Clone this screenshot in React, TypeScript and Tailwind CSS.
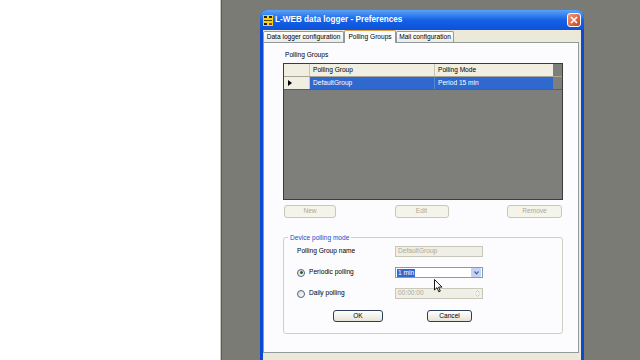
import React from "react";

function XpButton({ label, disabled, className = "" }: { label: string; disabled?: boolean; className?: string }) {
  return (
    <div
      className={`flex items-center justify-center rounded-[3px] border ${
        disabled
          ? "border-[#c9c7ba] bg-[#f5f4ea] text-[#aca899]"
          : "border-[#2b3f5c] bg-gradient-to-b from-white to-[#e6e3d6] text-black"
      } ${className}`}
    >
      {label}
    </div>
  );
}

function Radio({ checked }: { checked?: boolean }) {
  return (
    <div className="flex h-[8px] w-[8px] items-center justify-center rounded-full border border-[#4d6185] bg-gradient-to-br from-[#dcdcd4] to-white">
      {checked && <div className="h-[3px] w-[3px] rounded-full bg-[#2f5a2a]" />}
    </div>
  );
}

function TitleIcon() {
  return (
    <svg width="10" height="11" viewBox="0 0 10 11">
      <rect x="0" y="0" width="10" height="11" fill="#f4d21c" />
      <rect x="1" y="1" width="3" height="2" fill="#222" />
      <rect x="6" y="1" width="3" height="2" fill="#222" />
      <rect x="1" y="5" width="8" height="1" fill="#5a4a00" />
      <rect x="1" y="8" width="3" height="2" fill="#222" />
      <rect x="6" y="8" width="3" height="2" fill="#c03020" />
    </svg>
  );
}

function Dialog() {
  return (
    <div className="flex h-[360px] w-[324px] flex-col overflow-hidden rounded-t-[7px] bg-[#0b4ad0]">
      {/* Title bar */}
      <div className="flex h-[20px] shrink-0 items-center bg-gradient-to-b from-[#5aa2fa] via-[#1461e6] to-[#0c52d8] pl-[3px] pr-[3px]">
        <TitleIcon />
        <span className="ml-[2px] text-[8.2px] font-bold leading-none text-white">L-WEB data logger - Preferences</span>
        <div className="ml-auto flex h-[14px] w-[14px] items-center justify-center rounded-[3px] border border-white bg-gradient-to-br from-[#f09a78] to-[#c8401a]">
          <svg width="8" height="8" viewBox="0 0 8 8">
            <path d="M1 1 L7 7 M7 1 L1 7" stroke="white" strokeWidth="1.6" />
          </svg>
        </div>
      </div>

      {/* Body */}
      <div className="flex flex-1 flex-col border-x-[3px] border-[#0b4ad0] bg-[#ece9d8]">
        {/* Tabs */}
        <div className="flex h-[12px] items-end">
          <div className="flex h-[11px] w-[81px] items-center justify-center rounded-t-[2px] border border-b-0 border-[#919b9c] bg-gradient-to-b from-white to-[#ecebe5]">
            Data logger configuration
          </div>
          <div className="relative z-10 -mb-px flex h-[13px] w-[52px] items-center justify-center rounded-t-[2px] border border-b-0 border-[#919b9c] border-t-[#e8a040] bg-[#fcfcfe]">
            Polling Groups
          </div>
          <div className="flex h-[11px] w-[58px] items-center justify-center rounded-t-[2px] border border-b-0 border-[#919b9c] bg-gradient-to-b from-white to-[#ecebe5]">
            Mail configuration
          </div>
        </div>

        {/* Panel */}
        <div className="h-[311px] w-[316px] border border-[#919b9c] bg-[#fcfcfe] pl-[19px] pt-[7px]">
          <div className="h-[9px] pl-[2px] leading-[9px]">Polling Groups</div>

          {/* Grid */}
          <div className="mt-[4px] h-[137px] w-[280px] border border-[#3c3c3c] bg-[#7e7e7a]">
            <div className="flex h-[13px] border-b border-[#a8a697]">
              <div className="w-[26px] border-r border-[#c8c6b6] bg-[#f1efe2]" />
              <div className="flex w-[125px] items-center border-r border-[#c8c6b6] bg-[#f1efe2] pl-[3px]">Polling Group</div>
              <div className="flex w-[118px] items-center bg-[#f1efe2] pl-[3px]">Polling Mode</div>
            </div>
            <div className="flex h-[13px] border-b border-[#5d5d5a]">
              <div className="flex w-[26px] items-center border-r border-[#c8c6b6] bg-[#f1efe2] pl-[4px]">
                <svg width="4" height="6" viewBox="0 0 4 6">
                  <path d="M0 0 L4 3 L0 6 Z" fill="#000" />
                </svg>
              </div>
              <div className="flex w-[125px] items-center border-r border-[#5a86d6] bg-[#2f69cf] pl-[3px] text-white">DefaultGroup</div>
              <div className="flex w-[118px] items-center bg-[#2f69cf] pl-[3px] text-white">Period 15 min</div>
            </div>
          </div>

          {/* Grid buttons */}
          <div className="mt-[5px] flex w-[280px] justify-between pl-[1px] pr-[1px]">
            <XpButton label="New" disabled className="h-[13px] w-[52px]" />
            <XpButton label="Edit" disabled className="h-[13px] w-[54px]" />
            <XpButton label="Remove" disabled className="h-[13px] w-[55px]" />
          </div>

          {/* Group box */}
          <div className="relative mt-[19px] h-[97px] w-[280px] rounded-[3px] border border-[#d0d0bf] pl-[13px] pt-[8px]">
            <span className="absolute -top-[5px] left-[4px] bg-[#fcfcfe] px-[2px] leading-[9px] text-[#1150c8]">Device polling mode</span>

            <div className="flex h-[11px] items-center">
              <div className="w-[98px]">Polling Group name</div>
              <div className="flex h-[11px] w-[88px] items-center border border-[#c9c7ba] bg-[#f0efe6] pl-[2px] text-[#aca899]">DefaultGroup</div>
            </div>

            <div className="mt-[10px] flex h-[11px] items-center">
              <div className="flex w-[98px] items-center gap-[4px]">
                <Radio checked />
                <span>Periodic polling</span>
              </div>
              <div className="flex h-[11px] w-[88px] items-center border border-[#7f9db9] bg-white pl-[1px]">
                <span className="bg-[#2f69cf] px-[1px] leading-[8px] text-white">1 min</span>
                <div className="ml-auto mr-px flex h-[9px] w-[10px] items-center justify-center rounded-[1px] bg-[#c3d3f8]">
                  <svg width="5" height="4" viewBox="0 0 5 4">
                    <path d="M0.5 0.5 L2.5 2.8 L4.5 0.5" stroke="#4d6185" strokeWidth="1.2" fill="none" />
                  </svg>
                </div>
              </div>
            </div>

            <div className="mt-[10px] flex h-[11px] items-center">
              <div className="flex w-[98px] items-center gap-[4px]">
                <Radio />
                <span>Daily polling</span>
              </div>
              <div className="flex h-[11px] w-[88px] items-center border border-[#c9c7ba] bg-[#f0efe6] pl-[2px] text-[#aca899]">
                00:00:00
                <div className="ml-auto mr-px flex h-[9px] w-[7px] flex-col items-center justify-center gap-[1px] bg-[#f3f2ea]">
                  <svg width="5" height="3" viewBox="0 0 5 3"><path d="M0.5 2.5 L2.5 0.5 L4.5 2.5" stroke="#c9c7ba" fill="none" /></svg>
                  <svg width="5" height="3" viewBox="0 0 5 3"><path d="M0.5 0.5 L2.5 2.5 L4.5 0.5" stroke="#c9c7ba" fill="none" /></svg>
                </div>
              </div>
            </div>

            <div className="mt-[11px] flex h-[12px] items-center pl-[36px]">
              <XpButton label="OK" className="h-[12px] w-[50px]" />
              <XpButton label="Cancel" className="ml-[44px] h-[12px] w-[45px]" />
            </div>
          </div>
        </div>
      </div>
    </div>
  );
}

export default function App() {
  return (
    <div className="relative flex h-[360px] w-[640px] overflow-hidden bg-white font-['Liberation_Sans',Arial,sans-serif] text-[6.6px] leading-none text-black">
      <div className="w-[220px] shrink-0 bg-white" />
      <div className="w-[2px] shrink-0 border-r border-[#5f5f5a] bg-[#c8c8c0]" />
      <div className="flex-1 bg-[#7b7b76] pl-[38px] pt-[10px]">
        <Dialog />
      </div>

      {/* Mouse cursor */}
      <svg className="absolute left-[434px] top-[279px]" width="9" height="14" viewBox="0 0 9 14">
        <path d="M0.5 0.5 L0.5 11 L3 8.6 L4.8 12.8 L6.3 12.1 L4.6 8.1 L8 8.1 Z" fill="white" stroke="black" strokeWidth="0.9" />
      </svg>
    </div>
  );
}
